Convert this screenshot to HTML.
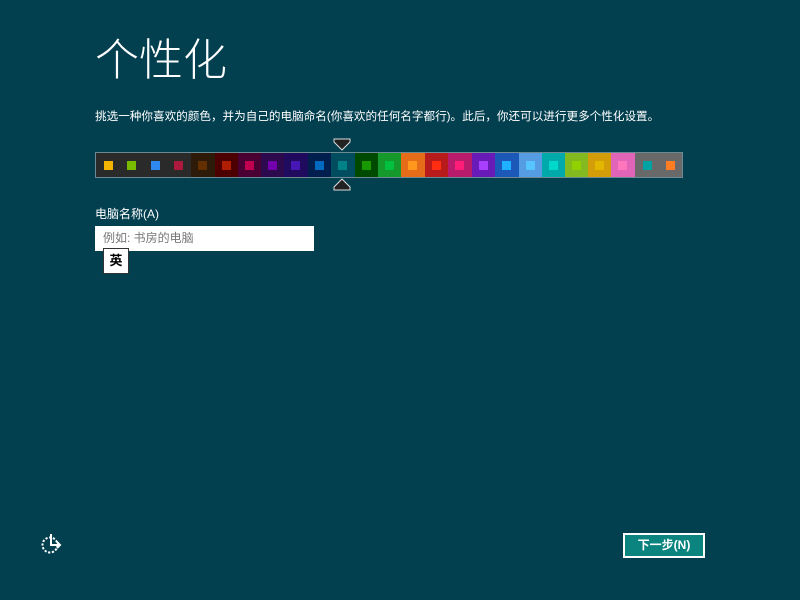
<!DOCTYPE html>
<html><head><meta charset="utf-8"><style>
body{margin:0;width:800px;height:600px;background:#023f4f;position:relative;overflow:hidden;font-family:"Liberation Sans","Noto Sans CJK SC",sans-serif;color:#fff}
.a{position:absolute}
#t{left:95px;top:31px;font-size:44px;line-height:60px;font-weight:300}
#s{left:95px;top:109px;font-size:11.6px;line-height:16px;white-space:nowrap}
#bar{left:95px;top:152px;width:586px;height:24px;border:1px solid #6c8a93;display:flex}
#bar div{height:24px;position:relative}
#bar i{position:absolute;width:9px;height:9px;top:8px}
#lbl{left:95px;top:205px;font-size:12px}
#inp{left:95px;top:226px;width:219px;height:25px;background:#fff;color:#777;font-size:12px;line-height:25px;box-sizing:border-box;padding-left:8px}
#ime{left:103px;top:248px;width:24px;height:24px;background:#fff;border:1px solid #333;color:#000;font-size:13px;font-weight:bold;text-align:center;line-height:24px}
#btn{left:623px;top:533px;width:78px;height:21px;border:2px solid #fff;background:#0b8480;font-size:12px;font-weight:bold;text-align:center;line-height:21px}
</style></head><body>
<div class="a" id="t">个性化</div>
<div class="a" id="s">挑选一种你喜欢的颜色，并为自己的电脑命名(你喜欢的任何名字都行)。此后，你还可以进行更多个性化设置。</div>
<svg class="a" style="left:333px;top:138px" width="18" height="14"><path d="M1 1H17V4L9 12L1 4Z" fill="#222" stroke="#ddd" stroke-width="1"/></svg>
<svg class="a" style="left:333px;top:177px" width="18" height="14"><path d="M1 13H17V10L9 2L1 10Z" fill="#222" stroke="#ddd" stroke-width="1"/></svg>
<div class="a" id="bar">
<div style="width:95px;background:#2a2a2a"><i style="left:8px;background:#f4b300"></i><i style="left:31px;background:#78ba00"></i><i style="left:55px;background:#2d89ef"></i><i style="left:78px;background:#ac193d"></i></div>
<div style="width:24px;background:#2d1a08"><i style="left:7px;background:#632f00"></i></div>
<div style="width:23px;background:#4c0000"><i style="left:7px;background:#b01e00"></i></div>
<div style="width:24px;background:#4a0032"><i style="left:7px;background:#c1004f"></i></div>
<div style="width:23px;background:#2c0a4d"><i style="left:7px;background:#7200ac"></i></div>
<div style="width:24px;background:#1f0a5d"><i style="left:7px;background:#4617b4"></i></div>
<div style="width:23px;background:#001e4e"><i style="left:7px;background:#006ac1"></i></div>
<div style="width:24px;background:#004d60"><i style="left:7px;background:#008287"></i></div>
<div style="width:23px;background:#004a00"><i style="left:7px;background:#199900"></i></div>
<div style="width:23px;background:#15992a"><i style="left:7px;background:#00c13f"></i></div>
<div style="width:24px;background:#e56c19"><i style="left:7px;background:#ff981d"></i></div>
<div style="width:23px;background:#b81b1b"><i style="left:7px;background:#ff2e12"></i></div>
<div style="width:24px;background:#b81b6c"><i style="left:7px;background:#ff1d77"></i></div>
<div style="width:23px;background:#691bb8"><i style="left:7px;background:#aa40ff"></i></div>
<div style="width:24px;background:#1b58b8"><i style="left:7px;background:#1fb0ff"></i></div>
<div style="width:23px;background:#569ce3"><i style="left:7px;background:#56c5ff"></i></div>
<div style="width:24px;background:#00aaaa"><i style="left:7px;background:#00d8cc"></i></div>
<div style="width:23px;background:#83ba1f"><i style="left:7px;background:#91d100"></i></div>
<div style="width:23px;background:#d39d09"><i style="left:7px;background:#e1b700"></i></div>
<div style="width:24px;background:#e064b7"><i style="left:7px;background:#ff76bc"></i></div>
<div style="width:47px;background:#696969"><i style="left:8px;background:#00a3a3"></i><i style="left:31px;background:#fe7c22"></i></div>
</div>
<div class="a" id="lbl">电脑名称(A)</div>
<div class="a" id="inp">例如: 书房的电脑</div>
<div class="a" id="ime">英</div>
<svg class="a" style="left:40px;top:533px" width="24" height="22"><circle cx="10" cy="12" r="7.5" fill="none" stroke="#fff" stroke-width="2" stroke-dasharray="2.2 1.6"/><path d="M11 1V12H20M17 9L20 12L17 15" fill="none" stroke="#fff" stroke-width="2"/></svg>
<div class="a" id="btn">下一步(N)</div>
</body></html>
